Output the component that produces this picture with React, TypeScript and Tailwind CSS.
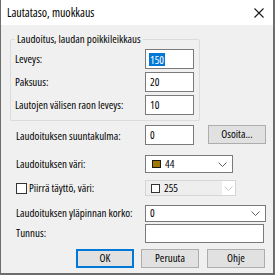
import React from "react";

const font = { fontFamily: "'Open Sans', 'Noto Sans', sans-serif", fontStretch: "condensed" } as React.CSSProperties;

function Chevron({ color = "#606060" }: { color?: string }) {
  return (
    <svg width="9" height="5" viewBox="0 0 9 5" className="block">
      <path d="M0.5 0.5 L4.5 4.5 L8.5 0.5" fill="none" stroke={color} strokeWidth="1" />
    </svg>
  );
}

function TextInput({ w, h = "h-[20px]", value, selected }: { w: string; h?: string; value?: string; selected?: boolean }) {
  return (
    <div className={`${w} ${h} shrink-0 bg-white border border-[#7a7a7a] flex items-center pl-[3px]`}>
      {value !== undefined &&
        (selected ? (
          <span className="bg-[#0078d7] text-white leading-[13px] px-[1px]">{value}</span>
        ) : (
          <span className="px-[1px]">{value}</span>
        ))}
    </div>
  );
}

function Btn({ label, focused, w = "w-[58px]" }: { label: string; focused?: boolean; w?: string }) {
  return (
    <div
      className={`${w} h-[19px] shrink-0 flex items-center justify-center bg-[#e1e1e1] border ${
        focused ? "border-[#0078d7] shadow-[inset_0_0_0_1px_#0078d7]" : "border-[#adadad]"
      }`}
    >
      {label}
    </div>
  );
}

export default function App() {
  return (
    <div
      className="w-[275px] h-[275px] bg-[#f0f0f0] border-l border-r-2 border-b-2 border-[#6d6d6d] text-[11px] text-black overflow-hidden"
      style={font}
    >
      {/* title bar */}
      <div className="h-[25px] bg-white flex items-center justify-between pl-[6px] pr-[9px]">
        <span className="text-[12px]">Lautataso, muokkaus</span>
        <svg width="10" height="10" viewBox="0 0 10 10">
          <path d="M0.5 0.5 L9.5 9.5 M9.5 0.5 L0.5 9.5" stroke="#1a1a1a" strokeWidth="1.1" />
        </svg>
      </div>

      {/* group box */}
      <div className="relative mt-[14px] ml-[9px] w-[190px] border border-[#dcdcdc] rounded-[2px] pt-[9px] pb-[5px] pl-[4px] pr-[5px] flex flex-col gap-[3px]">
        <span className="absolute -top-[9px] left-[4px] bg-[#f0f0f0] px-[2px] leading-[16px]">
          Laudoitus, laudan poikkileikkaus
        </span>
        <div className="flex items-center h-[20px]">
          <span className="flex-1">Leveys:</span>
          <TextInput w="w-[49px]" value="150" selected />
        </div>
        <div className="flex items-center h-[20px]">
          <span className="flex-1">Paksuus:</span>
          <TextInput w="w-[49px]" value="20" />
        </div>
        <div className="flex items-center h-[20px]">
          <span className="flex-1">Lautojen välisen raon leveys:</span>
          <TextInput w="w-[49px]" value="10" />
        </div>
      </div>

      {/* suuntakulma */}
      <div className="flex items-start mt-[4px] h-[20px]">
        <span className="ml-[15px] w-[129px] h-[20px] flex items-center pt-[3px]">Laudoituksen suuntakulma:</span>
        <TextInput w="w-[49px]" value="0" />
        <div className="ml-[14px]">
          <Btn label="Osoita..." />
        </div>
      </div>

      {/* väri */}
      <div className="flex items-center mt-[10px] h-[18px]">
        <span className="ml-[15px] w-[129px]">Laudoituksen väri:</span>
        <div className="w-[88px] h-[18px] bg-white border border-[#7a7a7a] flex items-center pl-[6px] pr-[5px]">
          <span className="w-[9px] h-[8px] bg-[#a07800] border border-[#1a1a1a]" />
          <span className="ml-[4px] flex-1">44</span>
          <Chevron />
        </div>
      </div>

      {/* täyttö */}
      <div className="flex items-center mt-[7px] h-[16px]">
        <div className="ml-[15px] w-[129px] flex items-center">
          <span className="w-[11px] h-[11px] bg-white border border-[#333333]" />
          <span className="ml-[2px]">Piirrä täyttö, väri:</span>
        </div>
        <div className="w-[91px] h-[16px] bg-white border border-[#d5d5d5] flex items-center">
          <div className="flex-1 h-full bg-[#eeeeee] flex items-center pl-[5px]">
            <span className="w-[9px] h-[9px] bg-white border border-[#333333]" />
            <span className="ml-[4px]">255</span>
          </div>
          <div className="w-[13px] h-full flex items-center justify-center">
            <Chevron color="#c6c6c6" />
          </div>
        </div>
      </div>

      {/* korko */}
      <div className="flex items-center mt-[9px] h-[17px]">
        <span className="ml-[15px] w-[129px]">Laudoituksen yläpinnan korko:</span>
        <div className="w-[121px] h-[17px] bg-white border border-[#7a7a7a] flex items-center pl-[4px] pr-[5px]">
          <span className="flex-1">0</span>
          <Chevron />
        </div>
      </div>

      {/* tunnus */}
      <div className="flex items-center mt-[2px] h-[19px]">
        <span className="ml-[15px] w-[129px]">Tunnus:</span>
        <TextInput w="w-[119px]" h="h-[19px]" />
      </div>

      {/* buttons */}
      <div className="flex items-center mt-[6px] ml-[75px] gap-[7px]">
        <Btn label="OK" focused />
        <Btn label="Peruuta" />
        <div className="ml-[1px]">
          <Btn label="Ohje" />
        </div>
      </div>
    </div>
  );
}
